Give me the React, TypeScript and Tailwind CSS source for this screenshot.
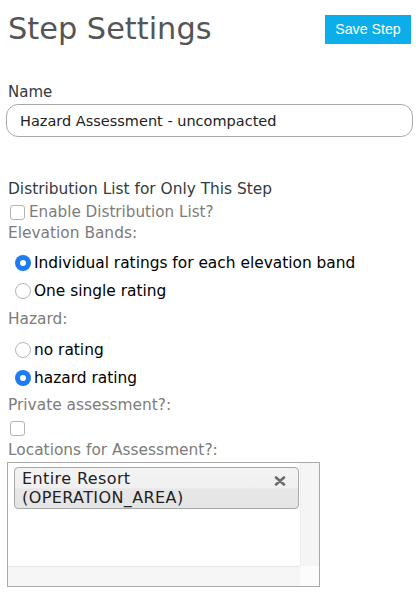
import React from 'react'

// ============================================================
// SMALL PARTS
// ============================================================

function Radio({ checked }: { checked: boolean }) {
  return checked ? (
    <span className="w-[16px] h-[16px] rounded-full bg-[#1f7bf2] flex items-center justify-center shrink-0">
      <span className="w-[6px] h-[6px] rounded-full bg-white" />
    </span>
  ) : (
    <span className="w-[16px] h-[16px] rounded-full border border-[#b4b4b4] bg-white shrink-0" />
  )
}

function Checkbox() {
  return <span className="w-[15px] h-[15px] rounded-[3px] border border-[#b4b4b4] bg-white shrink-0" />
}

function RadioRow({ label, checked }: { label: string; checked: boolean }) {
  return (
    <div className="h-[28px] flex items-center pl-[9px]">
      <Radio checked={checked} />
      <span className="ml-[3px] text-[15.4px] leading-[20px] text-black">{label}</span>
    </div>
  )
}

function GrayLabel({ children, className = '' }: { children: React.ReactNode; className?: string }) {
  return <p className={`pl-[2px] text-[15.4px] leading-[20px] text-[#7c7c7c] ${className}`}>{children}</p>
}

// ============================================================
// PAGE
// ============================================================

export default function App() {
  return (
    <div className="w-[419px] min-h-[599px] bg-white px-[6px] font-['DejaVu_Sans',Verdana,sans-serif]">

      {/* Header */}
      <div className="flex items-start justify-between pt-[11px] pr-[2px]">
        <h1 className="pl-[2px] text-[30.4px] leading-[36px] text-[#555555] font-normal">Step Settings</h1>
        <button className="mt-[4px] h-[29px] w-[86px] bg-[#0caeea] text-white text-[14.2px] font-['Liberation_Sans',Arial,sans-serif]">
          Save Step
        </button>
      </div>

      {/* Name */}
      <p className="mt-[36px] pl-[2px] text-[15px] leading-[18px] text-[#333a40]">Name</p>
      <input
        readOnly
        value="Hazard Assessment - uncompacted"
        className="mt-[3px] w-full h-[33px] rounded-[12px] border border-[#a9a9a9] px-[13px] text-[14.5px] text-[#222] outline-none"
      />

      {/* Distribution list */}
      <p className="mt-[42px] pl-[2px] text-[15.4px] leading-[20px] text-[#333a40]">Distribution List for Only This Step</p>
      <div className="mt-[3px] h-[20px] flex items-center pl-[4px]">
        <Checkbox />
        <span className="ml-[4px] text-[15.2px] leading-[20px] text-[#7c7c7c]">Enable Distribution List?</span>
      </div>

      {/* Elevation bands */}
      <GrayLabel className="mt-[1px]">Elevation Bands:</GrayLabel>
      <div className="mt-[6px]">
        <RadioRow label="Individual ratings for each elevation band" checked />
        <RadioRow label="One single rating" checked={false} />
      </div>

      {/* Hazard */}
      <GrayLabel className="mt-[4px]">Hazard:</GrayLabel>
      <div className="mt-[7px]">
        <RadioRow label="no rating" checked={false} />
        <RadioRow label="hazard rating" checked />
      </div>

      {/* Private */}
      <GrayLabel className="mt-[3px]">Private assessment?:</GrayLabel>
      <div className="mt-[5px] h-[16px] flex items-center pl-[4px]">
        <Checkbox />
      </div>

      {/* Locations */}
      <GrayLabel className="mt-[4px]">Locations for Assessment?:</GrayLabel>
      <div className="mt-[2px] ml-[1px] w-[313px] h-[125px] border border-[#a9a9a9] flex flex-col">
        <div className="flex flex-1 min-h-0">
          <div className="flex-1 pt-[4px] pl-[6px] pr-[1px]">
            <div className="flex items-start justify-between rounded-[4px] border border-[#a9a9a9] bg-[linear-gradient(#f3f3f3_0%,#f0f0f0_50%,#e7e7e7_52%,#e5e5e5_100%)] pt-[2px] pb-[1px] pl-[7px] pr-[12px]">
              <p className="text-[16px] leading-[18.5px] tracking-[0.4px] text-[#222]">
                Entire Resort
                <br />
                (OPERATION_AREA)
              </p>
              <svg width="12" height="10" viewBox="0 0 12 10" className="mt-[6px]">
                <path d="M2 1.5 L10 8.5 M10 1.5 L2 8.5" stroke="#6b6b6b" strokeWidth="2.6" strokeLinecap="round" />
              </svg>
            </div>
          </div>
          <div className="w-[19px] bg-[#f5f5f5] border-l border-[#ececec]" />
        </div>
        <div className="flex h-[20px]">
          <div className="flex-1 bg-[#f6f6f6] border-t border-[#e6e6e6]" />
          <div className="w-[19px] bg-[#fcfcfc]" />
        </div>
      </div>
    </div>
  )
}
